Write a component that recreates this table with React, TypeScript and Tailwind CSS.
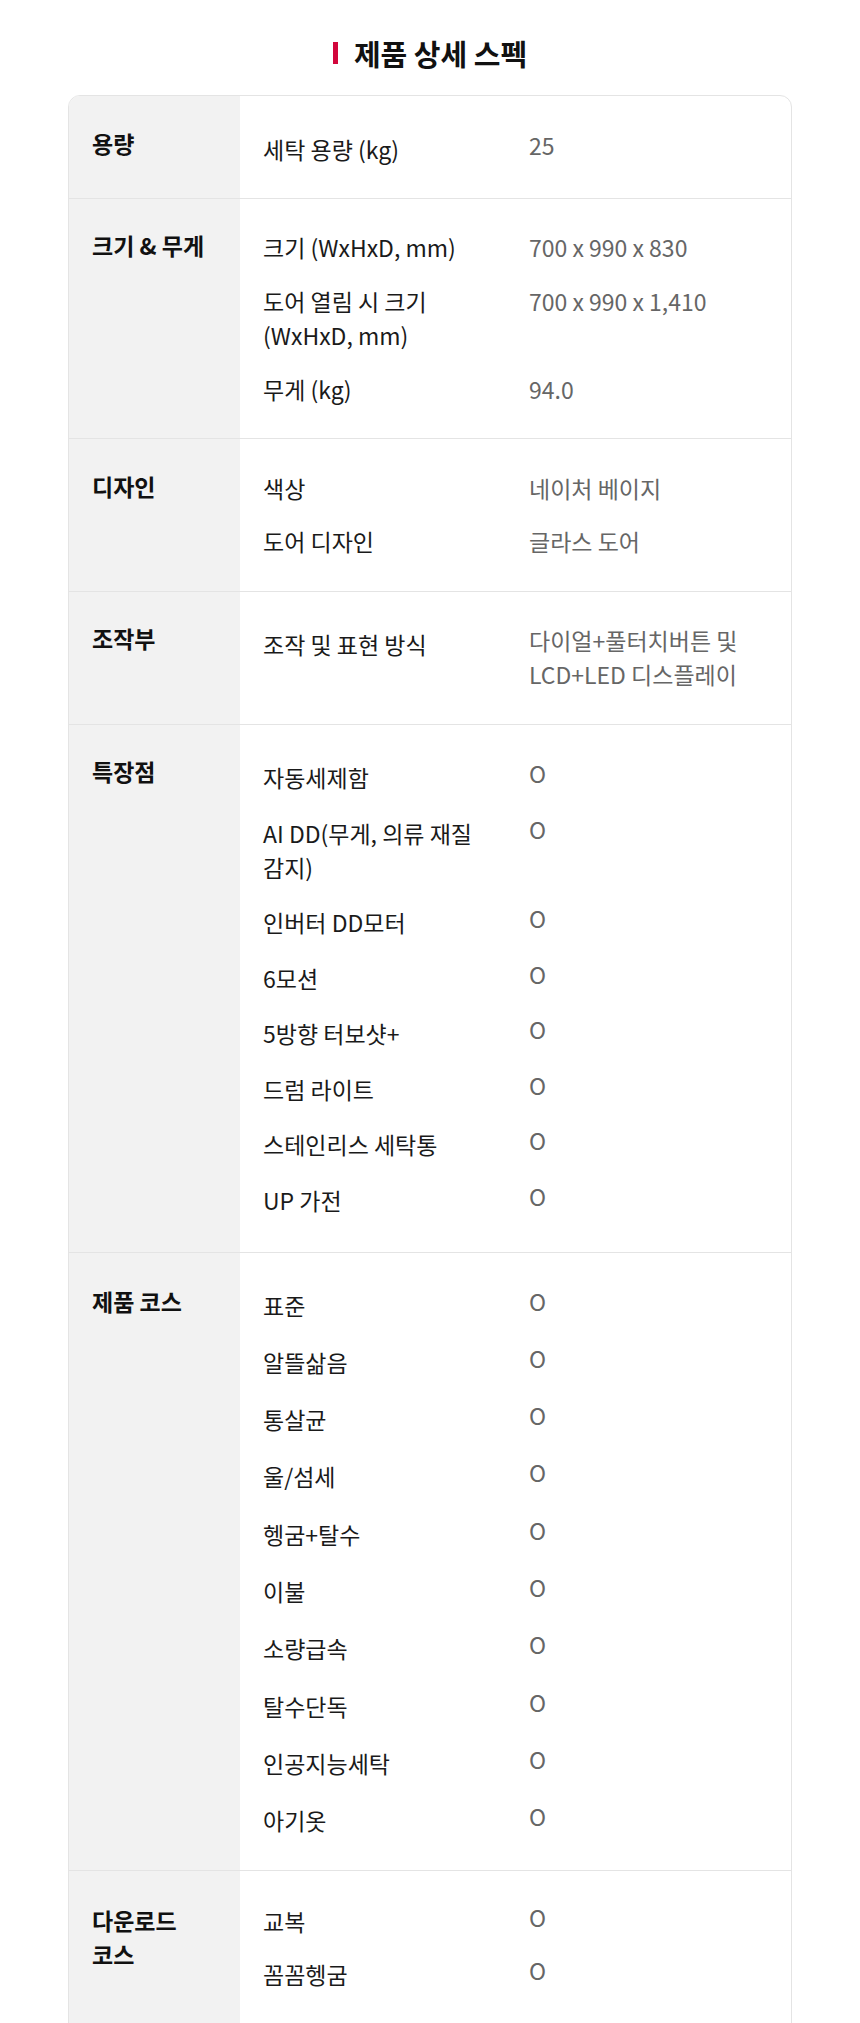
import React from "react";

type Item = [string, string];
type Section = {
  label: string;
  items: Item[];
  labelPt: string;
  contentPad: string;
  gap: string;
  shift: boolean;
};

const O = "O";

const sections: Section[] = [
  {
    label: "용량",
    items: [["세탁 용량 (kg)", "25"]],
    labelPt: "pt-[31px]",
    contentPad: "pt-[36px] pb-[32px]",
    gap: "gap-[20px]",
    shift: true,
  },
  {
    label: "크기 & 무게",
    items: [
      ["크기 (WxHxD, mm)", "700 x 990 x 830"],
      ["도어 열림 시 크기 (WxHxD, mm)", "700 x 990 x 1,410"],
      ["무게 (kg)", "94.0"],
    ],
    labelPt: "pt-[30px]",
    contentPad: "pt-[31px] pb-[32px]",
    gap: "gap-[20px]",
    shift: false,
  },
  {
    label: "디자인",
    items: [
      ["색상", "네이처 베이지"],
      ["도어 디자인", "글라스 도어"],
    ],
    labelPt: "pt-[31px]",
    contentPad: "pt-[32px] pb-[33px]",
    gap: "gap-[19px]",
    shift: false,
  },
  {
    label: "조작부",
    items: [["조작 및 표현 방식", "다이얼+풀터치버튼 및 LCD+LED 디스플레이"]],
    labelPt: "pt-[30px]",
    contentPad: "pt-[35px] pb-[33px]",
    gap: "gap-[20px]",
    shift: true,
  },
  {
    label: "특장점",
    items: [
      ["자동세제함", O],
      ["AI DD(무게, 의류 재질 감지)", O],
      ["인버터 DD모터", O],
      ["6모션", O],
      ["5방향 터보샷+", O],
      ["드럼 라이트", O],
      ["스테인리스 세탁통", O],
      ["UP 가전", O],
    ],
    labelPt: "pt-[30px]",
    contentPad: "pt-[35px] pb-[35px]",
    gap: "gap-[21.5px]",
    shift: true,
  },
  {
    label: "제품 코스",
    items: [
      ["표준", O],
      ["알뜰삶음", O],
      ["통살균", O],
      ["울/섬세", O],
      ["헹굼+탈수", O],
      ["이불", O],
      ["소량급속", O],
      ["탈수단독", O],
      ["인공지능세탁", O],
      ["아기옷", O],
    ],
    labelPt: "pt-[32px]",
    contentPad: "pt-[35px] pb-[33px]",
    gap: "gap-[23.3px]",
    shift: true,
  },
  {
    label: "다운로드 코스",
    items: [
      ["교복", O],
      ["꼼꼼헹굼", O],
    ],
    labelPt: "pt-[33px]",
    contentPad: "pt-[33px] pb-[33px]",
    gap: "gap-[19px]",
    shift: true,
  },
];

export default function App() {
  return (
    <div
      className="min-h-[2023px] bg-white"
      style={{ fontFamily: '"Noto Sans CJK KR", "Noto Sans", sans-serif' }}
    >
      <div className="mx-auto w-[724px] pt-[36px]">
        <div className="mb-[25px] flex items-center justify-center gap-[16px]">
          <span className="block h-[22px] w-[5px] bg-[#d2063c]" />
          <h2 className="text-[29px] font-bold leading-[34px] text-[#111]">
            제품 상세 스펙
          </h2>
        </div>

        <div className="overflow-hidden rounded-t-[12px] border border-[#e4e4e4]">
          {sections.map((s, i) => (
            <div
              key={s.label}
              className={
                "grid grid-cols-[171px_1fr] " +
                (i < sections.length - 1 ? "border-b border-[#e4e4e4]" : "")
              }
            >
              <div
                className={
                  "break-keep bg-[#f2f2f2] pl-[23px] pr-[30px] pb-[20px] text-[23px] font-bold leading-[33.5px] text-[#111] " +
                  s.labelPt
                }
              >
                {s.label}
              </div>
              <div
                className={
                  "flex flex-col pl-[23px] pr-[24px] " + s.gap + " " + s.contentPad
                }
              >
                {s.items.map(([name, value]) => (
                  <div key={name} className="grid grid-cols-[266px_1fr]">
                    <div className="break-keep pr-[24px] text-[23px] leading-[34px] text-[#1a1a1a]">
                      {name}
                    </div>
                    <div
                      className={
                        "break-keep text-[23px] leading-[34px] text-[#666] " +
                        (s.shift ? "-mt-[4px]" : "")
                      }
                    >
                      {value}
                    </div>
                  </div>
                ))}
              </div>
            </div>
          ))}
        </div>
      </div>
    </div>
  );
}
